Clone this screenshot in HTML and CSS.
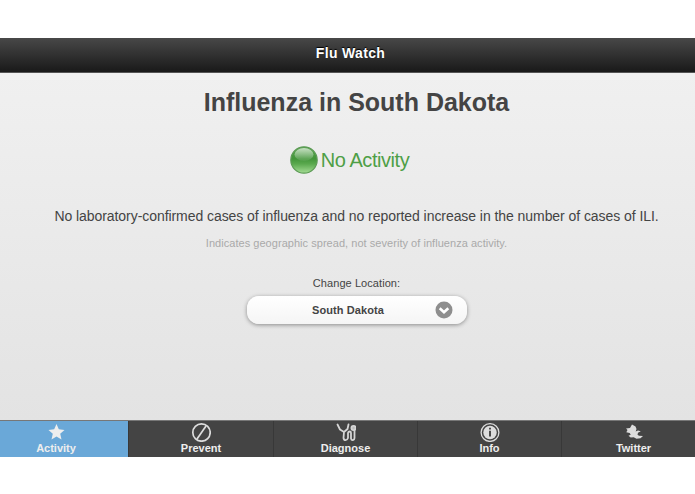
FILE: index.html
```html
<!DOCTYPE html>
<html lang="en">
<head>
  <meta charset="UTF-8">
  <title>Flu Watch</title>
  <link rel="stylesheet" href="styles.css">
</head>
<body>

<div class="page">
  <header class="header">
    <h1>Flu Watch</h1>
  </header>

  <main class="content">
    <h2>Influenza in South Dakota</h2>

    <div class="level">
      <svg class="orb" viewBox="0 0 28 28">
        <defs>
          <linearGradient id="ball" x1="0" y1="0" x2="0" y2="1">
            <stop offset="0" stop-color="#5ba552"/>
            <stop offset=".45" stop-color="#43953a"/>
            <stop offset=".65" stop-color="#5aa94e"/>
            <stop offset="1" stop-color="#a5dc95"/>
          </linearGradient>
          <linearGradient id="shine" x1="0" y1="0" x2="0" y2="1">
            <stop offset="0" stop-color="#fff" stop-opacity=".65"/>
            <stop offset="1" stop-color="#fff" stop-opacity=".05"/>
          </linearGradient>
        </defs>
        <circle cx="14" cy="14" r="13.2" fill="url(#ball)" stroke="#5d9b56" stroke-width="1.2"/>
        <ellipse cx="14" cy="8.5" rx="9.5" ry="6.5" fill="url(#shine)"/>
      </svg>
      <span>No Activity</span>
    </div>

    <p class="summary">No laboratory-confirmed cases of influenza and no reported increase in the number of cases of ILI.</p>
    <p class="note">Indicates geographic spread, not severity of influenza activity.</p>

    <div class="location">
      <label>Change Location:</label>
      <div class="select">
        <span>South Dakota</span>
        <svg viewBox="0 0 18 18">
          <circle cx="9" cy="9" r="8.5" fill="#8e8e8e"/>
          <path d="M4.7 7.2 9 11.3l4.3-4.1" fill="none" stroke="#fff" stroke-width="2.6"/>
        </svg>
      </div>
    </div>
  </main>

  <!-- ========= TAB BAR ========= -->
  <nav class="tabs">
    <a class="tab active">
      <svg viewBox="0 0 20 20"><path d="M10.5 2l2.3 5.3 5.7.6-4.3 3.9 1.3 5.7-5-3-5 3 1.3-5.7-4.3-3.9 5.7-.6z" fill="#eee"/></svg>
      <span>Activity</span>
    </a>
    <a class="tab">
      <svg viewBox="0 0 20 20" fill="none" stroke="#ddd" stroke-width="1.7"><circle cx="10.5" cy="10.5" r="8.7"/><path d="M15 4 6 17"/></svg>
      <span>Prevent</span>
    </a>
    <a class="tab">
      <svg viewBox="0 0 20 20" fill="none" stroke="#d5d5d5" stroke-width="1.8" stroke-linecap="round" stroke-linejoin="round">
        <path d="M1.5 2.5 4 7.500l4 2.500 3.500-3 1-4.500M8 10l-.5 6c.5 2.800 3.500 2.800 4.500 0V11c.5-2 3-2 3 0v5.500c.5 2.500 3.500 2 3.500-.5V8"/>
        <circle cx="17.500" cy="6" r="2.100" fill="#bbb"/>
      </svg>
      <span>Diagnose</span>
    </a>
    <a class="tab">
      <svg viewBox="0 0 20 20">
        <circle cx="10" cy="10.5" r="8.9" fill="none" stroke="#ddd" stroke-width="1.3"/>
        <circle cx="10" cy="10.5" r="6.7" fill="#ddd"/>
        <path d="M10 8.800v5.700M10 5.800v1.800" fill="none" stroke="#444" stroke-width="1.900"/>
      </svg>
      <span>Info</span>
    </a>
    <a class="tab">
      <svg viewBox="0 0 20 20"><path d="M8 2.500l3.500 2 1 2.500-.8 2.500 2.300-1 2.800.7-2.800 1.600-.5 2 1.500 1 4 .2-2.500 2.200-4 .5-2.800-1.500-3 .3-2.200-1.800 2.200-1-1-1.700-3.400-.8L3.500 8 2 6.500l4-.5z" fill="#ddd"/></svg>
      <span>Twitter</span>
    </a>
  </nav>
</div>

</body>
</html>
```

FILE: styles.css
```css
html, body {
  margin: 0;
  padding: 0;
  background: #fff;
  color: #444;
  font-family: "Liberation Sans", Arial, Helvetica, sans-serif;
}

h1, h2, p { margin: 0; }

.page {
  display: flex;
  flex-direction: column;
  width: 695px;
  height: 419px;
  margin-top: 38px;
  overflow: hidden;
}

/* ---------- Title bar ---------- */
.header {
  height: 34px;
  padding-left: 6px;
  background: linear-gradient(#484848, #191919);
  border-bottom: 1px solid #555;
  text-align: center;
}
.header h1 {
  color: #fff;
  font-size: 14px;
  line-height: 30px;
  letter-spacing: .35px;
  text-shadow: 0 -1px 1px #000;
}

/* ---------- Content ---------- */
.content {
  flex: 1;
  display: flex;
  flex-direction: column;
  align-items: center;
  padding-left: 18px;
  background: linear-gradient(#f0f0f0, #e3e3e3);
  white-space: nowrap;
}
.content h2 {
  margin-top: 13px;
  font-size: 25px;
  line-height: 32px;
}

.level {
  display: flex;
  align-items: center;
  gap: 3px;
  height: 30px;
  margin: 27px 0 0 -14px;
  color: #4e9f46;
  font-size: 20px;
  letter-spacing: -.45px;
}
.orb { width: 28px; height: 28px; }

.summary {
  margin-top: 31px;
  font-size: 14px;
  line-height: 20px;
  letter-spacing: -.06px;
}
.note {
  margin-top: 9px;
  color: #a9a9a9;
  font-size: 11px;
  line-height: 16px;
  letter-spacing: .04px;
}

.location {
  display: flex;
  flex-direction: column;
  align-items: center;
  margin-top: 24px;
}
.location label { font-size: 11px; line-height: 16px; letter-spacing: .07px; }
.select {
  display: flex;
  align-items: center;
  box-sizing: border-box;
  width: 220px;
  height: 28px;
  margin-top: 5px;
  padding: 0 14px 0 15px;
  background: linear-gradient(#fff, #f5f5f5);
  border-radius: 12px;
  box-shadow: 0 1px 4px rgba(0, 0, 0, .4);
  font-size: 11px;
  font-weight: bold;
}
.select span { flex: 1; text-align: center; letter-spacing: .08px; }
.select svg { width: 18px; height: 18px; }

/* ---------- Tab bar ---------- */
.tabs {
  display: grid;
  grid-template-columns: 145px 145px 144px 144px 143px;
  height: 36px;
  margin-left: -16px;
  border-top: 1px solid #777;
  background: #444;
}
.tab {
  display: flex;
  flex-direction: column;
  align-items: center;
  box-sizing: border-box;
  padding-top: 1px;
  border-right: 1px solid #383838;
  color: #eee;
  font-size: 11px;
  font-weight: bold;
  line-height: 12px;
}
.tab:last-child { border-right: 0; }
.tab svg { width: 20px; height: 20px; }
.tab.active { background: #6aa8d8; }
```
